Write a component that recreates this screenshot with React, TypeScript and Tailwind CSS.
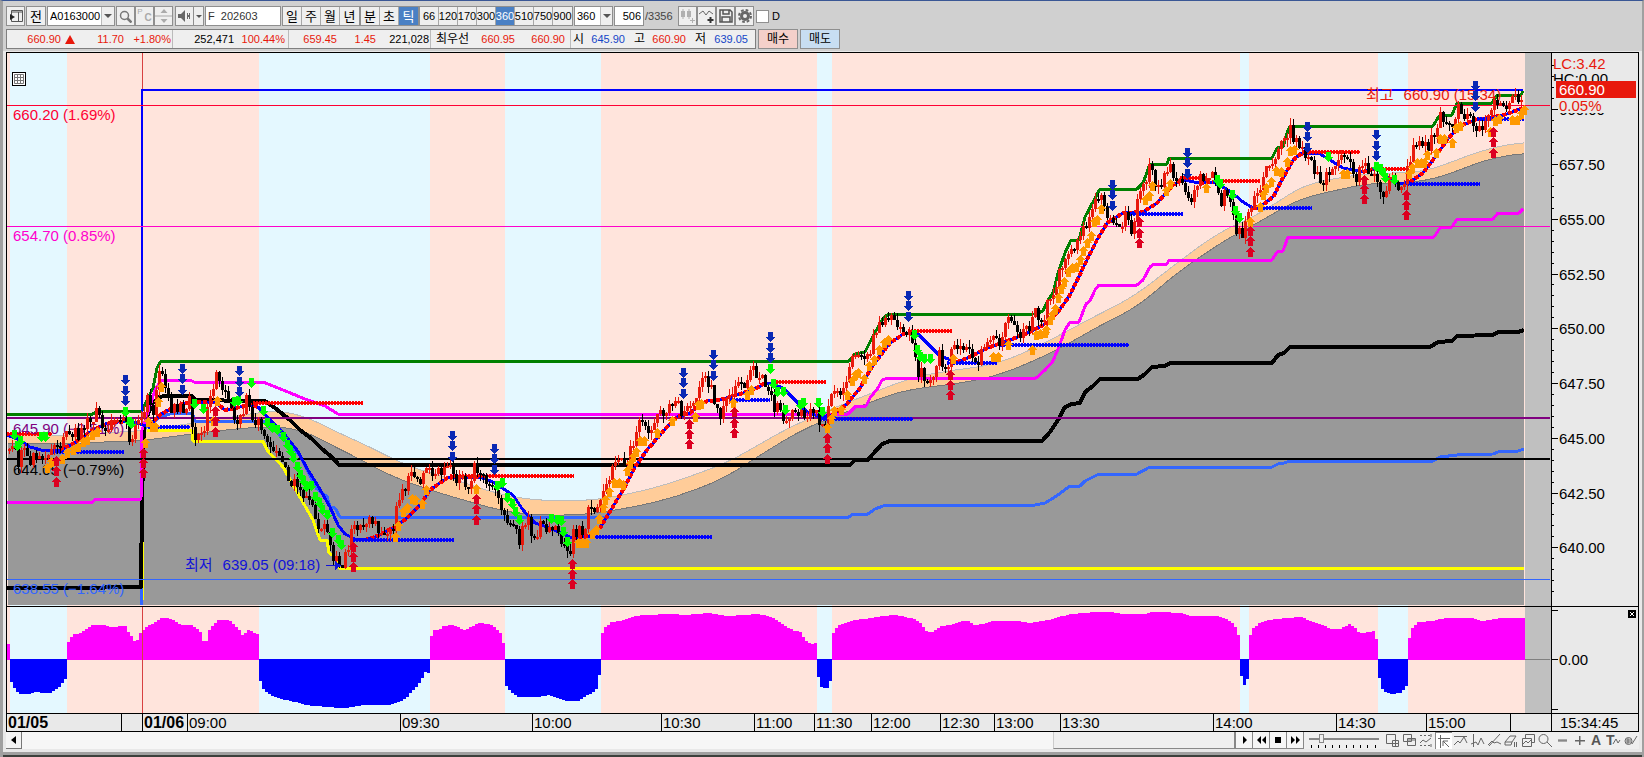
import type { ReactNode } from "react";

type Pt = [number, number];

const RED = "#e8190c";

const GROUPS = [
  { items: ["일", "주", "월", "년"], active: "" },
  { items: ["분", "초", "틱"], active: "틱" },
];

const TICKS = ["66", "120", "170", "300", "360", "510", "750", "900"];

// left edge of every background band, alternating down / up trend
const BANDS = [7, 10, 67, 259, 430, 505, 601, 817, 832, 1240, 1249, 1378, 1408, 1525];

const TIMES = [
  { x: 7, label: "01/05", bold: true },
  { x: 121, label: "" },
  { x: 142, label: "01/06", bold: true },
  { x: 187, label: "09:00" },
  { x: 400, label: "09:30" },
  { x: 532, label: "10:00" },
  { x: 661, label: "10:30" },
  { x: 754, label: "11:00" },
  { x: 814, label: "11:30" },
  { x: 871, label: "12:00" },
  { x: 940, label: "12:30" },
  { x: 994, label: "13:00" },
  { x: 1060, label: "13:30" },
  { x: 1213, label: "14:00" },
  { x: 1336, label: "14:30" },
  { x: 1426, label: "15:00" },
  { x: 1510, label: "" },
];

const parse = (s: string): Pt[] =>
  s.trim().split(/\s+/).map((p) => p.split(",").map(Number) as Pt);

const CLOUD_TOP = `8,434 50,436 100,433 142,431 193,423 233,417 267,411 283,411 303,415 347,437 373,448 400,463 420,470 457,480 490,492 530,500 577,501 603,499 647,490 680,480 713,468 733,460 763,442 790,427 833,408 880,390 907,379 940,372 993,365 1027,352 1073,328 1103,312 1137,295 1167,270 1193,252 1213,235 1240,223 1267,210 1287,195 1307,183 1323,181 1360,174 1390,173 1423,172 1440,167 1460,158 1473,154 1493,147 1524,142`;
const CLOUD_BOTTOM = `8,443 67,444 100,442 143,441 167,437 193,434 233,429 260,427 300,428 333,446 360,459 390,476 433,491 477,504 507,512 533,515 583,515 617,510 657,502 690,492 727,477 763,453 807,427 847,412 880,398 910,389 930,387 967,382 993,377 1027,364 1057,350 1080,337 1110,320 1140,306 1173,275 1197,260 1213,247 1240,232 1267,218 1287,205 1307,196 1330,192 1350,187 1370,183 1407,183 1440,178 1455,172 1470,165 1497,157 1524,153`;
const GREEN = `7,414 93,414 97,411 142,411 147,400 153,388 157,368 161,361 849,361 855,354 865,352 872,338 882,320 887,315 1035,314 1043,311 1048,300 1053,293 1058,273 1065,253 1071,240 1079,240 1085,217 1093,202 1100,189 1137,189 1143,183 1150,164 1167,164 1169,158 1272,158 1277,148 1283,147 1288,130 1290,126 1433,126 1439,116 1452,115 1457,103 1492,103 1497,95 1521,95 1523,91`;
const MAGENTA = `7,502 93,502 95,499 141,499 142,430 147,415 155,390 161,380 190,380 194,382 263,382 283,390 305,399 325,406 338,414 848,414 856,406 866,406 870,398 878,388 882,380 888,378 1036,378 1045,370 1053,361 1060,344 1065,330 1070,322 1079,322 1086,304 1090,301 1095,290 1099,285 1137,285 1143,280 1150,267 1154,264 1167,264 1169,260 1272,260 1277,252 1283,251 1288,237 1434,237 1440,228 1452,227 1457,219 1493,219 1498,213 1519,213 1523,209`;
const BLACK = `7,588 93,588 118,587 141,587 142,500 144,425 152,404 159,397 165,396 192,396 195,400 252,401 265,401 275,408 290,420 300,430 312,439 322,449 333,458 339,465 850,465 855,460 868,460 873,454 882,444 890,441 1042,441 1050,432 1058,420 1065,407 1072,404 1080,403 1085,392 1093,386 1100,379 1138,379 1145,374 1152,367 1165,366 1170,363 1272,363 1278,355 1284,353 1290,347 1430,347 1438,342 1452,341 1457,336 1493,335 1498,332 1518,332 1524,330`;
const ROYAL = `143,430 160,417 173,413 192,413 195,421 265,421 300,455 316,488 323,494 327,496 330,507 335,508 340,517 849,517 853,514 868,514 875,509 886,505 1035,505 1045,503 1055,497 1070,486 1080,486 1085,481 1099,474 1137,474 1150,467 1272,467 1278,464 1284,463 1290,461 1433,461 1440,457 1457,455 1493,454 1498,452 1518,451 1524,449`;
const YELLOW = `147,430 192,430 193,441 263,441 267,450 283,467 297,492 313,520 320,540 327,540 329,553 335,557 339,568 1524,568`;
const AVERAGE = `7,435 20,440 30,447 45,451 60,450 75,443 90,432 105,424 118,422 130,421 143,425 150,425 160,415 175,406 190,402 215,402 225,410 235,408 250,405 258,407 270,420 285,435 297,450 308,470 318,486 330,507 338,525 345,534 355,539 365,540 375,537 385,532 395,527 407,518 420,505 430,490 447,478 457,477 480,477 493,482 513,495 523,510 535,523 547,527 563,534 572,538 590,536 600,528 612,508 623,490 635,467 647,450 667,427 677,417 690,413 698,406 707,401 720,400 743,393 757,388 765,383 773,384 783,388 797,402 807,412 820,417 832,415 847,404 860,388 873,365 890,343 905,333 917,333 927,343 940,356 957,362 970,357 987,348 1010,340 1030,332 1047,323 1058,312 1070,295 1083,268 1097,240 1107,223 1123,213 1143,212 1157,203 1173,185 1183,180 1200,183 1213,182 1230,191 1243,202 1253,208 1260,207 1273,197 1283,178 1293,160 1302,153 1320,154 1330,160 1343,168 1363,172 1377,168 1387,177 1400,184 1410,182 1423,173 1433,160 1447,140 1460,126 1477,119 1490,118 1507,114 1523,108`;
const RISING: Pt[] = [[60, 130], [150, 258], [365, 480], [572, 765], [832, 905], [957, 1183], [1200, 1213], [1253, 1302], [1363, 1377], [1410, 1523]];

// x1, x2, y of the dotted support / resistance levels
const RED_LEVELS = [[7, 52, 434], [253, 363, 403], [450, 574, 476], [773, 826, 382], [908, 952, 331], [1180, 1207, 178], [1222, 1260, 181], [1303, 1360, 152], [1382, 1407, 169]];
const BLUE_LEVELS = [[50, 124, 452], [148, 190, 427], [353, 454, 540], [590, 712, 537], [730, 770, 400], [820, 913, 419], [947, 997, 363], [1000, 1129, 345], [1130, 1183, 214], [1257, 1312, 208], [1404, 1480, 184], [1477, 1524, 119]];

const PRICE = `8,447 12,445 17,462 22,452 25,446 30,458 38,452 43,457 50,445 58,450 63,438 75,432 80,435 86,421 97,412 103,430 115,421 125,421 130,447 137,421 142,425 148,395 153,408 159,366 164,382 171,412 178,405 187,412 190,397 193,441 202,438 206,418 213,390 217,368 220,388 228,398 233,420 241,418 246,395 251,425 258,418 265,440 275,448 284,460 288,477 296,483 303,502 311,500 320,530 327,532 331,552 339,565 344,558 350,537 357,524 365,522 371,520 377,532 385,540 392,528 400,495 408,480 413,475 420,488 425,472 430,475 437,470 441,480 446,458 455,480 460,473 466,493 475,465 480,475 488,485 494,490 500,505 510,523 520,542 526,515 533,540 540,523 545,525 556,530 563,545 568,558 573,535 583,528 590,508 597,512 603,485 615,465 625,463 632,447 637,420 648,430 660,415 672,402 685,414 690,405 702,378 712,388 716,410 722,413 730,395 736,380 742,392 750,367 757,380 763,375 768,388 773,408 780,410 786,428 790,412 800,415 808,418 815,408 823,432 829,408 835,385 841,392 846,378 853,355 862,362 870,350 880,320 888,315 895,325 903,333 908,328 913,355 918,372 923,376 930,382 938,352 946,372 952,348 956,340 962,352 967,342 972,360 977,362 985,345 993,335 998,343 1008,320 1018,338 1030,328 1035,315 1043,316 1050,300 1055,290 1060,270 1067,250 1073,253 1080,240 1088,215 1100,190 1107,212 1114,230 1121,222 1127,212 1132,236 1139,190 1150,168 1159,192 1167,170 1170,165 1177,180 1183,182 1190,198 1200,180 1207,172 1215,180 1219,205 1225,193 1232,210 1237,235 1243,230 1250,205 1258,190 1265,170 1275,160 1280,150 1290,125 1296,145 1303,155 1312,165 1321,180 1330,175 1338,160 1345,152 1352,175 1358,178 1362,160 1368,170 1378,180 1384,203 1389,180 1395,188 1401,190 1407,170 1412,148 1420,143 1427,147 1433,138 1438,118 1443,120 1450,127 1458,108 1467,115 1475,125 1482,125 1490,112 1497,98 1505,107 1515,100 1523,92`;

// signals in groups of three: x, then the three heights
const SELLS = [[125, 380, 391, 401], [182, 369, 379, 390], [239, 371, 382, 392], [452, 436, 446, 457], [494, 449, 459, 470], [683, 373, 383, 394], [713, 355, 365, 376], [770, 337, 348, 358], [908, 296, 306, 317], [1112, 185, 195, 206], [1187, 153, 163, 174], [1307, 127, 137, 148], [1376, 135, 146, 156], [1475, 86, 96, 107]];
const BUYS = [[56, 461, 471, 482], [143, 453, 463, 473], [215, 411, 421, 432], [353, 547, 557, 567], [476, 499, 509, 520], [572, 564, 574, 584], [689, 424, 434, 444], [734, 412, 423, 433], [827, 438, 448, 459], [950, 375, 385, 395], [1139, 222, 233, 243], [1250, 231, 241, 252], [1364, 180, 189, 199], [1406, 195, 205, 215], [1493, 132, 142, 153]];

const FALLS = `14,435 20,441 17,446 41,437 45,437 125,412 129,422 131,424 194,404 203,409 234,402 238,401 251,383 263,411 267,423 272,428 277,430 283,437 287,445 290,451 293,458 297,467 300,475 303,481 306,487 311,486 315,497 319,503 322,510 327,515 332,533 338,540 341,545 497,486 502,483 507,498 512,504 515,512 519,520 551,519 557,520 561,521 563,532 567,542 770,369 773,384 777,392 783,392 785,410 800,405 803,403 818,403 822,412 914,335 917,350 920,357 924,359 930,359 1217,180 1220,184 1232,195 1235,211 1239,218 1328,157 1376,167 1380,169 1383,173 1385,178 1394,180`;
const RISES = `47,468 51,462 62,459 67,453 73,450 78,447 83,442 87,440 92,435 97,432 148,422 152,427 155,427 158,402 161,387 145,443 217,401 213,421 395,537 398,526 403,512 407,508 412,499 415,500 422,504 426,490 476,489 578,543 582,543 586,543 592,534 596,530 599,519 603,508 605,500 609,492 614,483 619,483 623,485 627,471 630,464 633,457 636,452 640,441 644,441 657,433 672,421 695,417 698,405 701,404 733,403 747,395 751,390 827,428 831,419 834,411 841,410 847,395 852,381 855,375 858,373 864,379 869,366 874,360 879,350 884,343 888,340 953,359 993,357 998,357 1008,345 1032,350 1036,335 1040,334 1045,333 1046,330 1050,320 1052,315 1055,309 1058,298 1061,289 1064,282 1068,272 1072,268 1076,267 1080,260 1083,251 1087,243 1091,236 1094,222 1097,220 1101,209 1145,200 1149,196 1152,186 1166,191 1170,184 1206,188 1250,222 1260,207 1263,195 1266,188 1271,182 1276,171 1281,172 1287,162 1290,151 1294,150 1343,174 1347,174 1409,174 1412,168 1417,163 1421,163 1424,163 1427,155 1436,153 1440,139 1444,139 1452,143 1456,128 1460,126 1490,132 1495,121 1499,119 1512,120 1517,120 1521,114 1524,110`;

const HISTOGRAM = [
  `7,644 9,644`,
  `10,682 13,688 16,692 20,694 30,694 32,692 48,693 53,691 58,687 62,682 66,676`,
  `67,642 70,637 73,634 79,633 85,629 91,625 103,625 110,627 124,626 127,632 130,636 133,641 138,640 139,633 145,627 154,622 160,618 168,618 175,622 181,625 190,625 196,629 199,632 202,641 205,641 208,630 213,624 217,620 228,620 232,624 238,630 242,637 245,631 248,629 252,632 258,635`,
  `259,681 262,689 268,694 275,698 290,701 305,705 325,707 340,708 352,707 360,705 388,705 397,702 404,699 409,693 415,687 421,678 424,672 429,674`,
  `430,636 433,630 441,629 442,626 450,625 457,627 463,630 468,629 469,627 478,623 488,624 493,627 499,633 502,643 504,643`,
  `505,686 508,690 511,693 517,697 535,697 548,695 556,698 565,701 577,701 583,697 592,692 595,689 598,675 600,675`,
  `601,633 604,627 610,622 622,620 634,616 640,615 670,614 685,615 706,613 727,616 757,614 768,616 775,620 784,626 793,631 800,632 802,637 805,641 811,644 816,642`,
  `817,677 820,687 823,688 826,688 829,681 831,681`,
  `832,633 835,628 838,625 850,621 859,619 871,618 880,616 893,615 904,617 914,619 920,624 925,631 930,633 935,629 940,626 950,625 960,621 967,621 973,625 982,624 990,621 1018,621 1027,623 1048,620 1057,617 1069,614 1093,612 1110,612 1120,614 1144,614 1150,612 1160,612 1180,613 1190,616 1216,616 1225,619 1231,623 1234,627 1237,635 1239,635`,
  `1240,676 1243,685 1246,679 1248,679`,
  `1249,635 1252,628 1258,623 1267,620 1285,618 1300,617 1309,621 1321,625 1330,629 1339,629 1348,624 1353,627 1357,632 1363,633 1372,631 1375,639 1377,639`,
  `1378,678 1381,689 1384,692 1390,694 1400,693 1405,686 1407,686`,
  `1408,638 1411,628 1417,622 1430,621 1444,618 1470,618 1480,621 1500,618 1524,618`,
].map(parse);

function valueAt(points: Pt[], x: number) {
  for (let i = 1; i < points.length; i++) {
    const [x0, y0] = points[i - 1];
    const [x1, y1] = points[i];
    if (x <= x1) return y0 + ((y1 - y0) * (x - x0)) / (x1 - x0);
  }
  return points[points.length - 1][1];
}

// rounds the corners of a curve by averaging it over a small window
function smooth(s: string) {
  const points = parse(s);
  const out: string[] = [];
  for (let x = 8; x <= 1524; x += 4) {
    let sum = 0;
    for (let k = -20; k <= 20; k += 5) sum += valueAt(points, Math.min(1524, Math.max(8, x + k)));
    out.push(`${x},${(sum / 9).toFixed(1)}`);
  }
  return out.join(" ");
}

const cloudTop = smooth(CLOUD_TOP);
const cloudBottom = smooth(CLOUD_BOTTOM);

const noise = (n: number) => {
  const v = Math.sin(n * 127.1 + 11.7) * 43758.5453;
  return v - Math.floor(v);
};

const pricePoints = parse(PRICE);
const candles = Array.from({ length: 505 }, (_, i) => {
  const x = 8 + i * 3;
  const jag = (k: number) => (noise(k) - 0.5) * 14;
  const open = Math.round(valueAt(pricePoints, x - 2) + jag(i));
  const close = Math.round(valueAt(pricePoints, x + 1) + jag(i + 1));
  const top = Math.min(open, close);
  const bottom = Math.max(open, close, top + 2);
  return {
    x,
    top,
    bottom,
    high: top - Math.round(noise(i + 900) * 7),
    low: bottom + Math.round(noise(i + 1700) * 7),
    color: close <= open ? RED : "#000",
  };
});

const bars = HISTOGRAM.flatMap((points) => {
  const list = [];
  for (let x = points[0][0]; x <= points[points.length - 1][0]; x += 3) {
    list.push({ x, y: Math.round(valueAt(points, x)) });
  }
  return list;
});

const PRICES = [657.5, 655, 652.5, 650, 647.5, 645, 642.5, 640];
const priceY = (p: number) => Math.round(164 + (657.5 - p) * 21.9);
const MINOR = Array.from({ length: 49 }, (_, i) => 662 - i * 0.5);

const LABELS = [
  { x: 13, y: 114, text: "660.20 (1.69%)", color: "text-[#ff0033]" },
  { x: 13, y: 235, text: "654.70 (0.85%)", color: "text-[#ff00cc]" },
  { x: 13, y: 428, text: "645.90 (−0.51%)", color: "text-[#800080]" },
  { x: 13, y: 469, text: "644.05 (−0.79%)", color: "text-black" },
  { x: 13, y: 588, text: "638.55 (−1.64%)", color: "text-[#3366ff]" },
  { x: 185, y: 564, tag: "최저", text: "639.05 (09:18)", color: "text-[#1212d8]" },
  { x: 1366, y: 94, tag: "최고", text: "660.90 (15:34)", color: "text-[#e8190c]" },
];

function Bands({ y, h }: { y: number; h: number }) {
  return (
    <>
      {BANDS.slice(0, -1).map((x, i) => (
        <rect key={x} x={x} y={y} width={BANDS[i + 1] - x} height={h} fill={i % 2 ? "#e4f8ff" : "#ffe4dc"} />
      ))}
      <rect x={1525} y={y} width={26} height={h} fill="#c0c0c0" />
    </>
  );
}

function Line({ points, color, w }: { points: string; color: string; w: number }) {
  return <polyline points={points} fill="none" stroke={color} strokeWidth={w} strokeLinejoin="round" />;
}

function Level({ from, to, y, color }: { from: number; to: number; y: number; color: string }) {
  return (
    <g stroke={color}>
      <path d={`M${from} ${y}H${to}`} strokeWidth={4} strokeDasharray="2 1" />
      <path d={`M${from} ${y}H${to}`} strokeWidth={2} />
    </g>
  );
}

function Arrow({ x, y, up, color }: { x: number; y: number; up?: boolean; color: string }) {
  const d = up ? "M0-5l5 5h-2v5h-5v-5h-3z" : "M0 5l5-5h-2v-5h-5v5h-3z";
  return <path transform={`translate(${x} ${y})`} d={d} fill={color} />;
}

function ChartLines() {
  const average = parse(AVERAGE);
  return (
    <svg className="block h-full w-full" viewBox="7 53 1544 553" preserveAspectRatio="none" shapeRendering="crispEdges">
      <Bands y={53} h={553} />
      <polygon points={`8,605 ${cloudTop} 1524,605`} fill="#ffcc99" />
      <polygon points={`8,605 ${cloudBottom} 1524,605`} fill="#999" />
      <Line points={cloudTop} color="#bdbdbd" w={1} />
      <Line points={cloudBottom} color="#777" w={1} />
      <path d="M142.500 53V605" stroke="#d84040" />
      <Line points={YELLOW} color="#ff0" w={3} />
      <path d="M143.500 460V600" stroke="#ff0" />
      <Line points={ROYAL} color="#3366ff" w={3} />
      <path d="M141.500 588V605" stroke="#3366ff" strokeWidth={3} />
      <Line points={BLACK} color="#000" w={4} />
      <Line points={MAGENTA} color="#f0f" w={3} />
      <Line points={GREEN} color="#008000" w={3} />
      <path d="M142 412V90H1523" fill="none" stroke="#00f" strokeWidth={2} />
      <path d="M7 105.500H1550" stroke="#f03" />
      <path d="M7 226.500H1550" stroke="#f0c" />
      <path d="M7 418H1550" stroke="#800080" strokeWidth={2} />
      <path d="M7 459H1550" stroke="#000" strokeWidth={2} />
      <path d="M7 579.500H1550" stroke="#3366ff" />
      <Line points={AVERAGE} color="#00f" w={3} />
      {RISING.map(([from, to]) => {
        const pts = average.filter(([x]) => x >= from && x <= to).map((p) => p.join(",")).join(" ");
        return <polyline key={from} points={pts} fill="none" stroke="red" strokeWidth={4} strokeDasharray="4 2" />;
      })}
      {RED_LEVELS.map(([a, b, y]) => <Level key={a} from={a} to={b} y={y} color="#f00" />)}
      {BLUE_LEVELS.map(([a, b, y]) => <Level key={a} from={a} to={b} y={y} color="#00f" />)}
    </svg>
  );
}

function ChartMarks() {
  return (
    <svg className="absolute inset-0 h-full w-full" viewBox="7 53 1544 553" preserveAspectRatio="none" shapeRendering="crispEdges">
      {candles.map((c) => (
        <g key={c.x} fill={c.color}>
          <rect x={c.x} y={c.top} width={3} height={c.bottom - c.top} />
          <rect x={c.x + 1} y={c.high} width={1} height={c.low - c.high} />
        </g>
      ))}
      {parse(RISES).map(([x, y], i) => <Arrow key={i} x={x} y={y} up color="#ff9900" />)}
      {parse(FALLS).map(([x, y], i) => <Arrow key={i} x={x} y={y} color="#00ff00" />)}
      {SELLS.map(([x, ...ys]) => ys.map((y) => <Arrow key={`${x}-${y}`} x={x} y={y} color="#0a28b4" />))}
      {BUYS.map(([x, ...ys]) => ys.map((y) => <Arrow key={`${x}-${y}`} x={x} y={y} up color="#dc0020" />))}
      <path d="M326 565.500H336" stroke="#1212d8" />
      <path d="M335 561v9l6-4.500z" fill="#1212d8" />
    </svg>
  );
}

function PriceAxis() {
  return (
    <div className="relative w-[87px] shrink-0 overflow-hidden border-l border-black bg-[#e9e9e9]">
      <svg className="absolute inset-y-0 left-0 h-full w-[6px]" viewBox="0 53 6 553" preserveAspectRatio="none" shapeRendering="crispEdges">
        {MINOR.map((p) => (
          <rect key={p} x={0} y={priceY(p)} width={p % 2.5 === 0 ? 6 : 2} height={1} />
        ))}
      </svg>
      {PRICES.map((p) => (
        <span key={p} className="absolute left-[7px] -translate-y-1/2 leading-none" style={{ top: priceY(p) - 53 }}>
          {p.toFixed(2)}
        </span>
      ))}
      <div className="relative flex flex-col pl-px pt-[3px] leading-[15px]">
        <span className="text-[#e8190c]">LC:3.42</span>
        <span className="h-[10px] overflow-hidden">HC:0.00</span>
        <span className="ml-[3px] mr-[2px] bg-[#e8190c] pl-[3px] leading-[17px] text-white">660.90</span>
        <span className="pl-[6px] text-[#e8190c]">0.05%</span>
        {/* the 660.00 label stays hidden behind the current price, only its foot shows */}
        <span className="flex h-[2px] items-end overflow-hidden pl-[6px] leading-[11px]">660.00</span>
      </div>
    </div>
  );
}

function ToolButton({ label, children, className = "" }: { label: string; children: ReactNode; className?: string }) {
  return (
    <button
      aria-label={label}
      className={`flex h-5 w-[19px] shrink-0 items-center justify-center border border-[#8f8f8f] bg-[#efefef] ${className}`}
    >
      {children}
    </button>
  );
}

function Caret() {
  return (
    <svg width="8" height="4" viewBox="0 0 8 4" className="pointer-events-none shrink-0 fill-[#555]">
      <path d="M0 0h8L4 4z" />
    </svg>
  );
}

function Toolbar() {
  return (
    <div className="flex h-5 items-stretch text-[11px] leading-none">
      <ToolButton label="화면" className="mr-px w-5">
        <svg width="14" height="14" viewBox="0 0 14 14" fill="none" stroke="#555">
          <path d="M2.500 6V1.500h11v11h-11V10M2 3h12M9.500 3v9" />
          <path d="M1 5l5 3-5 3z" fill="#222" stroke="none" />
        </svg>
      </ToolButton>
      <button className="mr-px w-5 border border-[#8f8f8f] bg-[#efefef] text-[13px] leading-none">전</button>
      <div className="mr-px flex w-[68px] border border-[#8f8f8f] bg-white">
        <input aria-label="종목코드" defaultValue="A0163000" className="w-[53px] min-w-0 pl-[2px] outline-none" />
        <button aria-label="종목 목록" className="flex flex-1 items-center justify-center border-l border-[#bbb] bg-[#efefef]"><Caret /></button>
      </div>
      <ToolButton label="검색">
        <svg width="13" height="13" viewBox="0 0 13 13" fill="none" stroke="#777">
          <circle cx="5.500" cy="5.500" r="4" strokeWidth="1.500" />
          <path d="M8.500 8.500l4 4" strokeWidth="2.500" />
        </svg>
      </ToolButton>
      <ToolButton label="P/C" className="bg-[#e2e2e2]">
        <span className="-mt-2 mr-[2px] text-[8px] text-[#aaa]">P</span>
        <span className="mt-1 text-[10px] font-bold text-[#aaa]">C</span>
      </ToolButton>
      <ToolButton label="이동" className="mr-[2px] bg-[#e2e2e2]">
        <svg width="17" height="14" viewBox="0 0 17 14" fill="#aaa">
          <path d="M5.500 4L9 0l3.500 4zM5.500 10L9 14l3.500-4zM0 6.500h17v1H0z" />
        </svg>
      </ToolButton>
      <ToolButton label="소리">
        <svg width="14" height="12" viewBox="0 0 14 12" fill="#666">
          <path d="M0 4h3l4-4v12L3 8H0z" />
          <path d="M9 3h1v2H9zM9 7h1v2H9zM11 3h1v2h-1zM11 7h1v2h-1zM9 5h3v2H9z" />
        </svg>
      </ToolButton>
      <button aria-label="소리 설정" className="mr-px flex w-[10px] items-center justify-center border border-l-0 border-[#8f8f8f] bg-[#efefef]">
        <svg width="6" height="3" viewBox="0 0 6 3" className="fill-[#555]"><path d="M0 0h6L3 3z" /></svg>
      </button>
      <input aria-label="종목명" defaultValue="F  202603" className="mr-px w-[76px] whitespace-pre border border-[#8f8f8f] bg-white pb-[1px] pl-[2px] text-[#333] outline-none" />
      {GROUPS.map((group) => (
        <div key={group.items[0]} className="flex divide-x divide-[#a8a8a8] border border-[#8f8f8f] bg-[#efefef] text-[13px]">
          {group.items.map((item) => (
            <button key={item} className={`w-[19px] leading-none ${item === group.active ? "bg-[#4a80c4] text-white" : ""}`}>
              {item}
            </button>
          ))}
        </div>
      ))}
      <div className="mr-px flex divide-x divide-[#a8a8a8] border border-[#8f8f8f] bg-[#efefef]">
        {TICKS.map((tick) => (
          <button key={tick} className={`flex w-[19px] items-center justify-center ${tick === "360" ? "bg-[#4a80c4] text-white" : ""}`}>
            {tick}
          </button>
        ))}
      </div>
      <div className="relative mr-px flex w-[39px] border border-[#8f8f8f] bg-white">
        <select aria-label="틱 수" defaultValue="360" className="w-full appearance-none bg-transparent pl-[2px] outline-none">
          <option>360</option>
          <option>510</option>
        </select>
        <span className="pointer-events-none absolute inset-y-0 right-0 flex w-3 items-center justify-center border-l border-[#bbb] bg-[#efefef]"><Caret /></span>
      </div>
      <input aria-label="봉 개수" defaultValue="506" className="w-[30px] border border-[#8f8f8f] bg-white pr-[2px] text-right outline-none" />
      <span className="flex w-[34px] items-center pl-px text-[#444]">/3356</span>
      <ToolButton label="차트 추가" className="bg-[#e2e2e2]">
        <svg width="15" height="14" viewBox="0 0 15 14" fill="#b0b0b0">
          <path d="M1 2h4v6H1zM7 2h4v6H7zM2.500 0h1v10h-1zM8.500 0h1v10h-1zM12 9h1v5h-1zM10 11h5v1h-5z" />
        </svg>
      </ToolButton>
      <ToolButton label="지표 추가">
        <svg width="15" height="14" viewBox="0 0 15 14" fill="none" stroke="#666">
          <path d="M0 5l4-3 3 4 3-4 4 3" />
          <path d="M11.500 8v6M8.500 11h6" stroke="#333" strokeWidth="2" />
        </svg>
      </ToolButton>
      <ToolButton label="저장">
        <svg width="14" height="14" viewBox="0 0 14 14" fill="none" stroke="#555" strokeWidth="1.500">
          <path d="M1 1h10l2 2v10H1zM4 1v4h6V1M3 13V8h8v5" />
        </svg>
      </ToolButton>
      <ToolButton label="설정" className="mr-[2px]">
        <svg width="14" height="14" viewBox="0 0 14 14" fill="none" stroke="#666">
          <circle cx="7" cy="7" r="3.500" strokeWidth="3" />
          <circle cx="7" cy="7" r="6" strokeWidth="2" strokeDasharray="2.700 2" />
        </svg>
      </ToolButton>
      <label className="flex items-center gap-[3px]">
        <input type="checkbox" className="size-[13px] appearance-none border border-[#8f8f8f] bg-white" />
        D
      </label>
    </div>
  );
}

function QuoteBar() {
  return (
    <div className="flex h-5 text-[11px] leading-none">
      <div className="flex w-[750px] items-center border border-[#7f7f7f] bg-[#efefef] text-right text-[#e8190c] *:shrink-0">
        <span className="w-[54px]">660.90</span>
        <svg width="18" height="9" viewBox="0 0 18 9" fill={RED}><path d="M4 9h10L9 0z" /></svg>
        <span className="w-[45px]">11.70</span>
        <span className="w-[47px]">+1.80%</span>
        <span className="ml-px h-full w-px bg-[#bbb]" />
        <span className="w-[61px] text-black">252,471</span>
        <span className="w-[51px]">100.44%</span>
        <span className="ml-[3px] h-full w-px bg-[#bbb]" />
        <span className="w-[48px]">659.45</span>
        <span className="w-[39px]">1.45</span>
        <span className="w-[53px] text-black">221,028</span>
        <span className="ml-px h-full w-px bg-[#bbb]" />
        <span className="w-[38px] text-[12px] leading-none text-black">최우선</span>
        <span className="w-[46px]">660.95</span>
        <span className="w-[50px]">660.90</span>
        <span className="ml-[5px] h-full w-px bg-[#bbb]" />
        <span className="w-[13px] text-[12px] leading-none text-black">시</span>
        <span className="w-[41px] text-[#1446c8]">645.90</span>
        <span className="w-[20px] text-[12px] leading-none text-black">고</span>
        <span className="w-[41px]">660.90</span>
        <span className="w-[20px] text-[12px] leading-none text-black">저</span>
        <span className="w-[42px] text-[#1446c8]">639.05</span>
      </div>
      <button className="ml-[2px] w-10 border border-[#8f8f8f] bg-[#f4d0ca] text-[12px] leading-none">매수</button>
      <button className="ml-[2px] w-10 border border-[#8f8f8f] bg-[#c8def2] text-[12px] leading-none">매도</button>
    </div>
  );
}

const PLAY = [
  { label: "재생", d: "M6 3l4 4-4 4z" },
  { label: "뒤로", d: "M7 3v8L3 7zM12 3v8L8 7z" },
  { label: "정지", d: "M4 4h6v6H4z" },
  { label: "앞으로", d: "M3 3l4 4-4 4zM8 3l4 4-4 4z" },
];

const TOOLS = [
  { label: "새 창", d: "M1.500 1.500h9v9h-9zM7.500 7.500h6v6h-6zM10.500 8v5M8 10.500h5" },
  { label: "창 복사", d: "M1.500 1.500h8v7h-8zM5.500 5.500h8v7h-8zM5.500 7h8" },
  { label: "영역", d: "M1 2.500h2m2 0h2m2 0h2M1 12.500h2m2 0h2m2 0h2M12 1v3M12 11v3M1 10l3-3 3 2 5-4" },
  { label: "선택", d: "M3.500 1v13M1 4.500h12M6 7l6 6M6 12V7h5", on: true },
  { label: "수평선", d: "M1 3.500h13M1 12l4-4 2 2 4-6 3 6" },
  { label: "수직선", d: "M3.500 1v13M1 11l5-2 2 3 3-7 3 6" },
  { label: "추세선", d: "M2 13L13 1M1 12l4-4 2 2 3-1 4 2" },
  { label: "지우개", d: "M1 9l5-6h6l-4 6zM1 9v3h6l1-3M10.500 9v5M12.500 9v5" },
  { label: "겹치기", d: "M4.500 5V1.500h9v8H11M1.500 5.500h9v8h-9zM2 11l3-3 2 2 3-3" },
  { label: "확대경", d: "M10 6a4.500 4.500 0 1 1-9 0 4.500 4.500 0 0 1 9 0zM9 9l5 5" },
  { label: "축소", d: "M3 7h9M3 8h9" },
  { label: "확대", d: "M3 7.500h10M8 3v9M3 8h10M7.500 3v9" },
  { label: "글자", text: "A" },
  { label: "글꼴", text: "T", d: "M7 11l3-5 2 4 2-3" },
  { label: "표시", d: "M9 8a3.500 3.500 0 1 1-7 0 3.500 3.500 0 0 1 7 0zM9 11l5-8M3 7h5M3 9h5M5 5v6" },
];

function BottomBar() {
  return (
    <div className="flex h-[17px] bg-[#efefef]">
      <button aria-label="왼쪽" className="flex w-4 items-center justify-center border-b border-r border-[#777] bg-[#f4f4f4]">
        <svg width="5" height="8" viewBox="0 0 5 8"><path d="M5 0v8L0 4z" /></svg>
      </button>
      <div className="flex flex-1 justify-end bg-[#f6f6f6]">
        <button aria-label="스크롤" className="w-[183px] border-b border-l border-r-2 border-b-[#888] border-l-[#ccc] border-r-[#888] bg-[#efefef]" />
      </div>
      {PLAY.map((p) => (
        <button key={p.label} aria-label={p.label} className="flex w-[17px] items-center justify-center border-b border-r border-[#888] bg-[#f6f6f6]">
          <svg width="14" height="14" viewBox="0 0 14 14"><path d={p.d} /></svg>
        </button>
      ))}
      <div className="ml-[5px] flex w-[70px] flex-col">
        <input
          type="range"
          aria-label="속도"
          defaultValue={15}
          className="mt-[2px] h-[9px] w-full appearance-none bg-[linear-gradient(#888,#888)] bg-[length:100%_2px] bg-center bg-no-repeat [&::-webkit-slider-thumb]:h-[9px] [&::-webkit-slider-thumb]:w-[5px] [&::-webkit-slider-thumb]:appearance-none [&::-webkit-slider-thumb]:border [&::-webkit-slider-thumb]:border-[#888] [&::-webkit-slider-thumb]:bg-[#efefef]"
        />
        <svg className="mt-[2px] h-[3px] w-full" viewBox="0 0 70 3" preserveAspectRatio="none">
          <path d="M2.500 0v3M9.500 0v3M16.500 0v3M23.500 0v3M30.500 0v3M37.500 0v3M44.500 0v3M51.500 0v3M58.500 0v3M66.500 0v3" stroke="#000" />
        </svg>
      </div>
      <div className="ml-[5px] flex w-[255px] justify-between">
        {TOOLS.map((t) => (
          <button key={t.label} aria-label={t.label} className={`flex w-[17px] items-center justify-center ${t.on ? "border-l border-t border-[#888] bg-white" : ""}`}>
            <svg width="15" height="15" viewBox="0 0 15 15" fill="none" stroke="#666">
              {t.d && <path d={t.d} />}
              {t.text && <text x={t.d ? 0 : 2} y="12" fill="#555" stroke="none" fontSize="14" fontWeight="700">{t.text}</text>}
            </svg>
          </button>
        ))}
      </div>
    </div>
  );
}

export default function App() {
  return (
    <main className="border-l-[3px] border-r-2 border-t border-l-[#a0a0a0] border-r-[#a0a0a0] border-t-[#3a5795] bg-[#e8e8e8] font-['Liberation_Sans','Noto_Sans_CJK_KR',sans-serif] text-[15px] text-black">
      <header className="flex h-[50px] flex-col gap-[3px] overflow-hidden bg-[#d0d0d0] pl-[3px] pt-[5px]">
        <Toolbar />
        <QuoteBar />
      </header>

      <div className="px-[3px] pt-px">
        <section className="border border-black">
          {/* Price pane */}
          <div className="flex h-[553px]">
            <div className="relative min-w-0 flex-1 overflow-hidden">
              <ChartLines />
              {LABELS.map((l) => (
                <span
                  key={l.text}
                  className={`absolute flex -translate-y-1/2 gap-[10px] whitespace-nowrap leading-none ${l.color}`}
                  style={{ left: `${((l.x - 7) / 1544) * 100}%`, top: l.y - 53 }}
                >
                  {l.tag && <span>{l.tag}</span>}
                  {l.text}
                </span>
              ))}
              <ChartMarks />
              <button aria-label="데이터 표" className="absolute left-[5px] top-[19px] flex size-[14px] items-center justify-center border border-black bg-white">
                <svg width="10" height="10" viewBox="0 0 10 10" fill="none" stroke="#777">
                  <path d="M.5.5h9v9h-9zM0 3.500h10M0 6.500h10M3.500 0v10M6.500 0v10" />
                </svg>
              </button>
            </div>
            <PriceAxis />
          </div>

          {/* Oscillator pane */}
          <div className="flex h-[107px] border-t border-black">
            <svg className="block h-full min-w-0 flex-1" viewBox="7 607 1544 106" preserveAspectRatio="none" shapeRendering="crispEdges">
              <Bands y={607} h={106} />
              {bars.map((b) =>
                b.y < 660 ? (
                  <rect key={b.x} x={b.x} y={b.y} width={3} height={660 - b.y} fill="#f0f" />
                ) : (
                  <rect key={b.x} x={b.x} y={659} width={3} height={b.y - 659} fill="#00f" />
                )
              )}
              <rect x={142} y={607} width={1} height={106} fill="#d84040" />
              <rect x={1525} y={659} width={25} height={1} fill="#808080" />
            </svg>
            <div className="relative flex w-[87px] shrink-0 items-center border-l border-black bg-[#e9e9e9]">
              <svg className="h-full w-[6px]" viewBox="0 607 6 106" shapeRendering="crispEdges">
                <path d="M0 610h6v1H0zM0 659h6v1H0zM0 709h6v1H0z" />
              </svg>
              <span className="pb-[2px] pl-px leading-none">0.00</span>
              <button aria-label="닫기" className="absolute right-[2px] top-[3px] flex size-2 items-center justify-center bg-black">
                <svg width="4" height="4" viewBox="0 0 4 4" stroke="#fff"><path d="M0 0l4 4M4 0L0 4" /></svg>
              </button>
            </div>
          </div>

          {/* Time axis */}
          <div className="flex h-[18px] border-t border-black bg-[#e9e9e9]">
            <div className="flex min-w-0 flex-1">
              {TIMES.map((t, i) => (
                <span
                  key={t.x}
                  className={`shrink-0 whitespace-nowrap pl-px leading-[17px] ${i ? "border-l border-black" : ""} ${t.bold ? "text-[16px] font-bold" : ""}`}
                  style={{ width: `${(((TIMES[i + 1]?.x ?? 1551) - t.x) / 1544) * 100}%` }}
                >
                  {t.label}
                </span>
              ))}
            </div>
            <span className="w-[87px] shrink-0 border-l border-black pl-2 leading-[17px]">15:34:45</span>
          </div>
        </section>
        <BottomBar />
      </div>
      <div className="mt-[3px] h-[3px] bg-[#a0a0a0]" />
      <div className="h-[2px] bg-[#3c403c]" />
    </main>
  );
}
